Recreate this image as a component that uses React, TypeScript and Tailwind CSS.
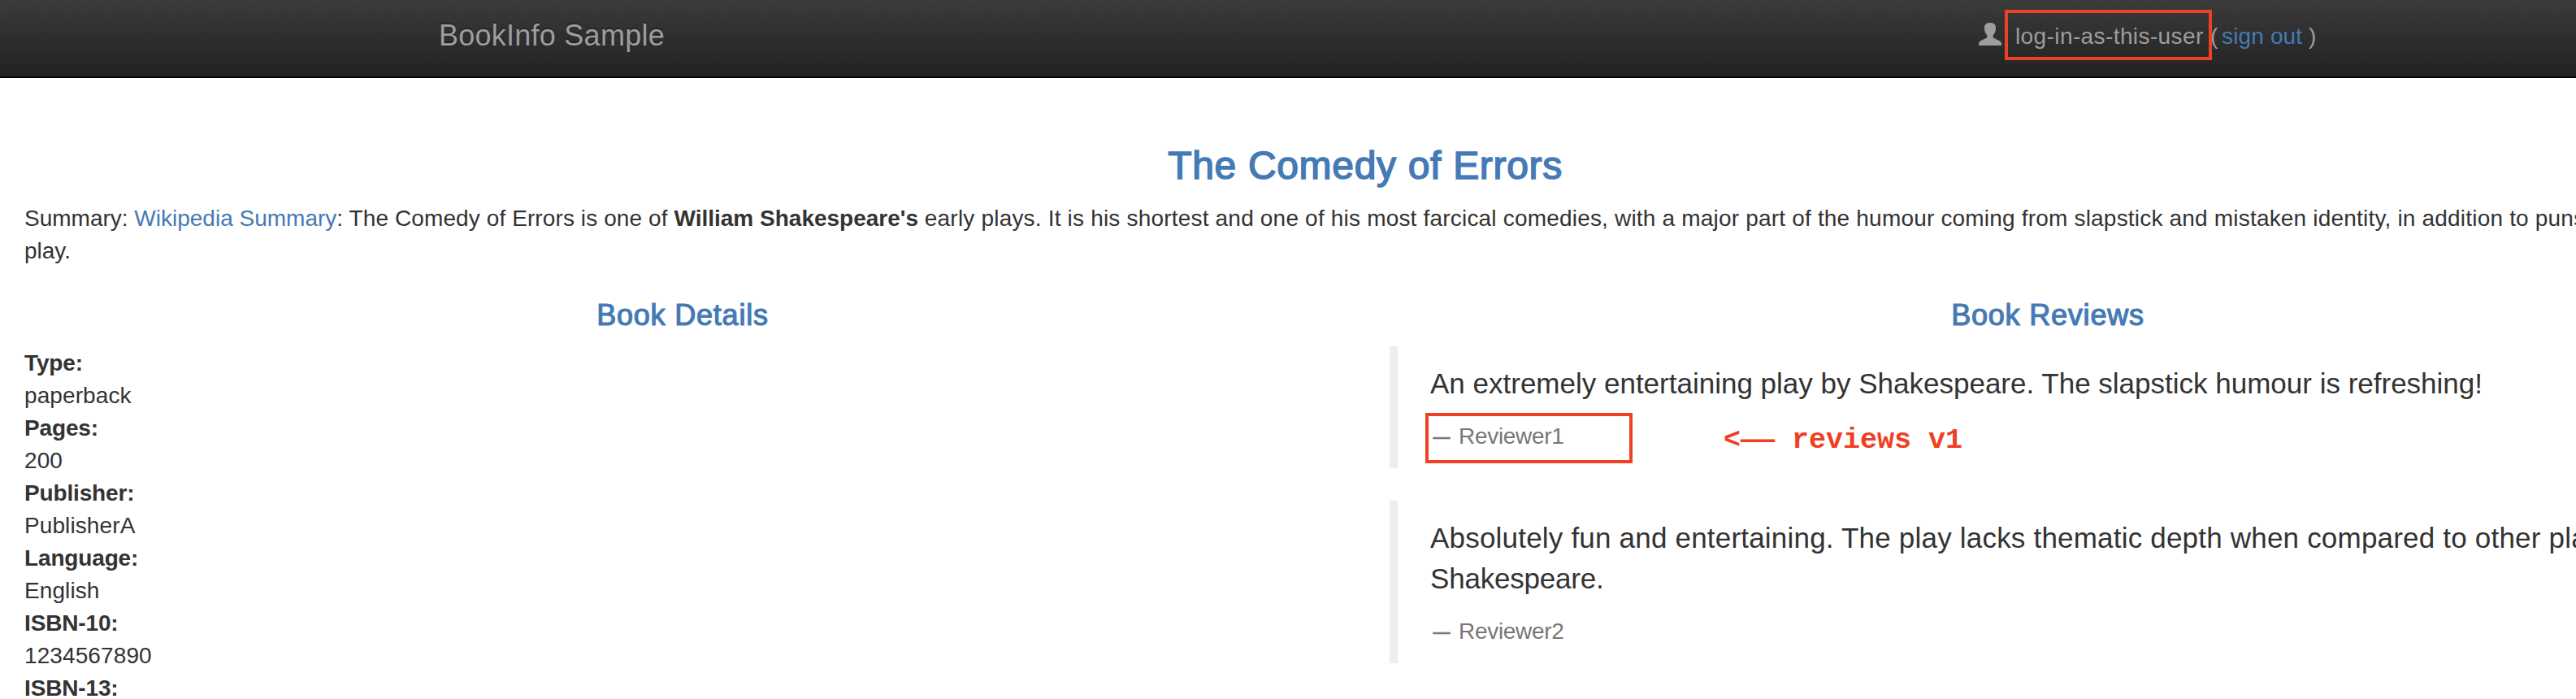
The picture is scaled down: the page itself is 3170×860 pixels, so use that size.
import type { ReactNode } from "react";

const details = [
  { label: "Type:", value: "paperback" },
  { label: "Pages:", value: "200" },
  { label: "Publisher:", value: "PublisherA" },
  { label: "Language:", value: "English" },
  { label: "ISBN-10:", value: "1234567890" },
  { label: "ISBN-13:", value: "" },
];

function UserIcon() {
  return (
    <svg viewBox="0 0 84 84" className="h-7 w-7 shrink-0 fill-[#9d9d9d]" aria-hidden="true">
      <path d="M21 18C21 5 30 0 42 0S63 5 63 18C63 32 60 38 53 46V53C53 57 72 62 80 69C83 72 84 75 84 78V84H0V78C0 75 1 72 4 69C12 62 31 57 31 53V46C24 38 21 32 21 18Z" />
    </svg>
  );
}

function Navbar() {
  return (
    <nav className="flex h-24 items-start border-b-2 border-[#080808] bg-linear-to-b from-[#3b3b3b] to-[#222222] pl-[540px] text-[#9d9d9d]">
      <span className="mt-6 w-[1895px] text-[36px] leading-10 tracking-[0.25px] [text-shadow:0_-2px_0_rgba(0,0,0,0.25)]">
        BookInfo Sample
      </span>
      <div className="mt-6 flex text-[28px] leading-10">
        <div className="mt-1">
          <UserIcon />
        </div>
        <div className="relative mt-px ml-[17px] w-[240px] whitespace-nowrap">
          <span className="tracking-[0.4px]">log-in-as-this-user</span>
          <div className="absolute -top-[13px] -left-[13px] h-[62px] w-[255px] border-4 border-[#ee4023]" />
        </div>
        <span className="mt-px w-[14px]">(</span>
        <a className="mt-px w-[107px] whitespace-nowrap text-[#457ab5] tracking-[0.15px]">sign out</a>
        <span className="mt-px">)</span>
      </div>
    </nav>
  );
}

function SectionTitle({ children }: { children: ReactNode }) {
  return (
    <h4 className="mb-[18px] text-center text-[36px] leading-10 tracking-[0.8px] text-[#457ab5] [-webkit-text-stroke:1.2px_#457ab5]">
      {children}
    </h4>
  );
}

function Review({ author, note, children }: { author: string; note?: string; children: ReactNode }) {
  return (
    <blockquote className="mb-10 border-l-10 border-[#eeeeee] pt-[21px] pb-[19px] pl-10">
      {children}
      <small className="relative mt-5 flex text-[28px] leading-10 text-[#777777]">
        <span className="mr-[7px] inline-block scale-x-75 [-webkit-text-stroke:0.6px_#777777]">—</span>
        <span className="tracking-[-0.3px]">{author}</span>
        {note && (
          <>
            <span className="absolute -top-[9px] -left-[6px] h-[62px] w-[255px] border-4 border-[#ee4023]" />
            <span className="absolute top-[5px] left-[361px] font-['Liberation_Mono',monospace] text-[35px] font-bold whitespace-pre text-[#ee4023]">
              {note}
            </span>
          </>
        )}
      </small>
    </blockquote>
  );
}

export default function App() {
  return (
    <div className="h-[860px] w-full overflow-hidden bg-white font-['Liberation_Sans',Arial,sans-serif] text-[28px] leading-10 text-[#333333]">
      <Navbar />
      <main className="w-[3360px] pt-[81px]">
        <h3 className="mb-[19px] text-center text-[48px] leading-[53px] tracking-[0.68px] text-[#457ab5] [-webkit-text-stroke:1.6px_#457ab5]">
          The Comedy of Errors
        </h3>
        <div className="mb-[39px] px-[30px]">
          <div className="flex whitespace-pre">
            <span>Summary: </span>
            <a className="text-[#457ab5]">Wikipedia Summary</a>
            <span className="tracking-[0.1px]">: The Comedy of Errors is one of </span>
            <b>William Shakespeare's </b>
            <span className="tracking-[0.19px]">
              early plays. It is his shortest and one of his most farcical comedies, with a major part of the humour coming from slapstick and mistaken identity, in addition to puns
            </span>
          </div>
          <div>play.</div>
        </div>
        <div className="grid grid-cols-2">
          <section className="px-[30px]">
            <SectionTitle>Book Details</SectionTitle>
            <dl className="pt-px">
              {details.map((d) => (
                <div key={d.label}>
                  <dt className="font-bold tracking-[-0.15px]">{d.label}</dt>
                  {d.value && <dd className="tracking-[0.1px]">{d.value}</dd>}
                </div>
              ))}
            </dl>
          </section>
          <section className="px-[30px]">
            <SectionTitle>Book Reviews</SectionTitle>
            <Review author="Reviewer1" note="<—— reviews v1">
              <p className="text-[35px] leading-[50px]">
                An extremely entertaining play by Shakespeare. The slapstick humour is refreshing!
              </p>
            </Review>
            <Review author="Reviewer2">
              <div className="text-[35px] leading-[50px] whitespace-nowrap">
                <div className="tracking-[0.2px]">
                  Absolutely fun and entertaining. The play lacks thematic depth when compared to other plays by
                </div>
                <div className="tracking-[-0.2px]">Shakespeare.</div>
              </div>
            </Review>
          </section>
        </div>
      </main>
    </div>
  );
}
